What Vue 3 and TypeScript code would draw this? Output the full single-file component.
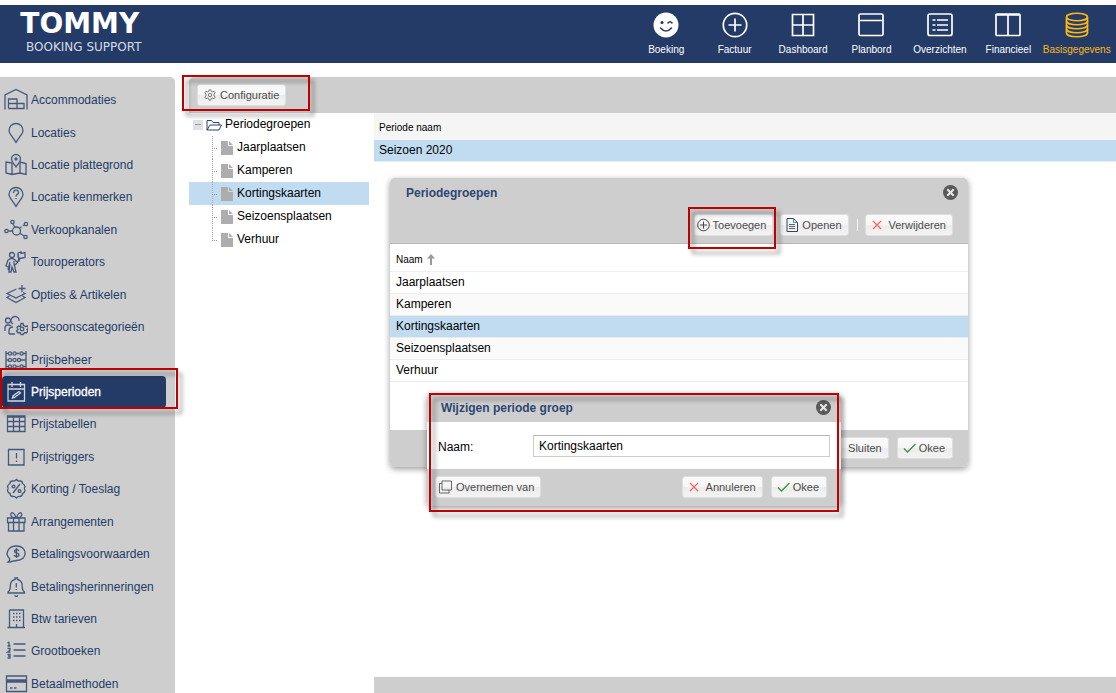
<script setup lang="ts">
import { ref } from 'vue'

interface Item {
  label: string
  icon: string[]
}

const circle = (x: number, y: number, r: number): string =>
  `M${x - r} ${y}a${r} ${r} 0 1 0 ${2 * r} 0a${r} ${r} 0 1 0 ${-2 * r} 0`

const navItems: Item[] = [
  { label: 'Boeking', icon: [] },
  { label: 'Factuur', icon: [circle(13, 13, 11.7), 'M13 6.5v13M6.5 13h13'] },
  { label: 'Dashboard', icon: ['M2.5 2.5h21v21h-21zM13 2.5v21M2.5 13h21'] },
  { label: 'Planbord', icon: ['M2.5 2h21q1.500 0 1.500 1.500v18.500q0 1.500-1.500 1.500h-21Q1 23.500 1 22V3.500Q1 2 2.500 2zM1 8.500h24'] },
  { label: 'Overzichten', icon: ['M3 2h20q2 0 2 2v17.500q0 2-2 2H3q-2 0-2-2V4q0-2 2-2z', 'M10 8h11M10 13h11M10 18h11', 'M5.500 8h3M5.500 13h3M5.500 18h3'] },
  { label: 'Financieel', icon: ['M2 2h22q1 0 1 1v19.500q0 1-1 1H2q-1 0-1-1V3q0-1 1-1zM13 2v21.500M1 3h24'] },
  {
    label: 'Basisgegevens',
    icon: [
      'M2.500 5c0-5 21-5 21 0s-21 5-21 0v16c0 5 21 5 21 0V5',
      'M2.500 9c0 5 21 5 21 0M2.500 13c0 5 21 5 21 0M2.500 17c0 5 21 5 21 0'
    ]
  }
]

const sideItems: Item[] = [
  { label: 'Accommodaties', icon: ['M1 21.500V7l11-5.500 11 5.500v14.500', 'M4.500 20.500V11h8.500v4.500M4.500 15.500H20v5H4.500M13 15.500v5'] },
  { label: 'Locaties', icon: ['M12 21.500C9 16 5 13 5 9.500a7 7 0 0 1 14 0C19 13 15 16 12 21.500z'] },
  {
    label: 'Locatie plattegrond',
    icon: ['M12 14c-2-3.500-4.500-5-4.500-8a4.500 4.500 0 0 1 9 0c0 3-2.500 4.500-4.500 8z', circle(12, 6, 1), 'M8 10l-6-1v11l6 1.500 8-1.500 6 1.500v-11l-6-1.500M8 10v11.500M16 10v10']
  },
  {
    label: 'Locatie kenmerken',
    icon: ['M12 21.500C9 16 5 13 5 9.500a7 7 0 0 1 14 0C19 13 15 16 12 21.500z', 'M9.500 8c0-4 5.500-3.500 5 0-.5 1.500-2.500 1.500-2.500 3.500M12 13v1']
  },
  {
    label: 'Verkoopkanalen',
    icon: [circle(12.5, 13, 4), circle(2.5, 13, 1.7), circle(8.500, 4, 1.700), circle(22, 6, 1.700), circle(21.500, 19, 1.700), 'M4.500 13h4M9 6l2 3.500M16 10l1.500-1.300M19 7.800l1-.7M15.800 15.300l4 2.500']
  },
  {
    label: 'Touroperators',
    icon: [circle(8, 5, 2.5), 'M14 3l3-1v1.500l4-1v5l-5 1-2-1.500zM14 3l1 9', 'M4 20l2-8M4 10q4-3 7 0l2 2 3-3M4 10l-2 6 2 1M6 14l-1 8h2l1-5 2 5h2l-2-8v-3M14 12l-3 3']
  },
  { label: 'Opties & Artikelen', icon: ['M18 2v7M14.500 5.500h7', 'M12.500 6L3 10.500l9 4.500 9-4.500-2-1M5.500 13L3 14.500l9 5 9-5-2.500-1.500'] },
  {
    label: 'Persoonscategorieën',
    icon: [circle(4, 5.500, 2.500), 'M15 6a4 4 0 1 0-6 3M1 16v-3q0-3 3-3 2 0 3 1M5 19v-3q0-4 4-4M5 19h6', circle(18, 14, 1.800), 'M17 8.500h2l.5 2 2 1 2-.5 1 2-1.500 1.500 1 1.500-1.500 2-2-.5-1.500 2h-2l-1-2-2 .5-1.500-2 1.500-1.500-1-2 1.500-1.500 2 .5z']
  },
  {
    label: 'Prijsbeheer',
    icon: ['M2 3v18.500M22 3v18.500M2 5.500h3M12 5.500h3M19 5.500h3M2 12h3M17 12h5M2 18.500h3M12 18.500h3M19 18.500h3', circle(6, 5.500, 1.600), circle(10.500, 5.500, 1.600), circle(17.500, 5.500, 1.600), circle(6, 12, 1.600), circle(10.500, 12, 1.600), circle(15, 12, 1.600), circle(6, 18.500, 1.600), circle(10.500, 18.500, 1.600), circle(17.500, 18.500, 1.600)]
  },
  { label: 'Prijsperioden', icon: ['M4 4.500h16.500V21H4zM4 9h16.500M8 2v5M16.500 2v5', 'M8.500 18l.5-2 6-4.500 1.500 1.500-6 4.500z'] },
  { label: 'Prijstabellen', icon: ['M3.500 4h17.500v15.500H3.500zM3.500 5h17.500M3.500 9.500H21M3.500 14.500H21M9.500 4v15.500M15.500 4v15.500'] },
  { label: 'Prijstriggers', icon: ['M4.500 4.500h15.500V20H4.500zM12.500 8v5.500M12.500 15.500V17'] },
  {
    label: 'Korting / Toeslag',
    icon: ['M12.500 2.500q1.500 2 3.500 1.500 2.500 0 2.500 2.500 2 1 2.500 3-1.500 2 0 4-.5 2.500-2.500 3 0 2.500-2.500 3-2-.5-3.500 1.500-2-2-4-1.500-2.500-.5-2.500-3-2-.5-2.500-3 1.500-2 0-4 .5-2 2.500-3 0-2.500 2.500-2.500 2 .5 4-1.500z', 'M9 16l7-9', circle(9.500, 9.500, 1.400), circle(15.500, 14, 1.400)]
  },
  { label: 'Arrangementen', icon: ['M3.500 8h17.500v4.500H3.500zM4.500 12.500V21H20v-8.500M9.500 8v13M15 8v13', 'M12 8C5 8 6 1.500 9 3q2 1 3 5M12.500 8c7 0 6-6.500 3-5q-2 1-3 5'] },
  { label: 'Betalingsvoorwaarden', icon: ['M4 20q2.500-1.500 1.500-3.500C.5 12 4 4 12.500 4 24 4 24 18.500 12.500 18.500 10 18.500 7 20.500 4 20z', 'M15 9c-1-2-5-1.500-4.500.5.500 2 4.500 1 4.500 3.500 0 2-4 2-5 0M12.500 6v10'] },
  { label: 'Betalingsherinneringen', icon: ['M4 17c3-2 2-5 2.500-8 .5-2.500 2-4 4.500-4.500V3h2.500v1.500c2.500.5 4 2 4.500 4.500.5 3-.5 6 2.500 8v1H4zM12.300 8v4.500M12.300 14v1M10.500 20.500q2 1.500 3.500 0'] },
  { label: 'Btw tarieven', icon: ['M5.500 3h14v17.500M5.500 3v17.500M3.500 20.500h17.500M12.500 20v-3', 'M9 6.500h1.500M12 6.500h1.500M15 6.500h1.500M9 10h1.500M12 10h1.500M15 10h1.500M9 13.500h1.500M12 13.500h1.500M15 13.500h1.500'] },
  { label: 'Grootboeken', icon: ['M9.500 5h12M9.500 11h12M9.500 17h12', 'M3.500 3.500H5V7M3.500 7h3M3.500 9.500H6v1.700L3.500 13H6.500M3.500 15.500H6V19H3.500M4 17.200h2'] },
  { label: 'Betaalmethoden', icon: ['M2.500 4h20v15.500h-20z', 'M2.500 8h20M2.500 9h20M2.500 10h20', 'M6 16h2.500M10 16h2.500'] }
]

const activeSide = ref('Prijsperioden')
const groups = ['Jaarplaatsen', 'Kamperen', 'Kortingskaarten', 'Seizoensplaatsen', 'Verhuur']
const selected = ref('Kortingskaarten')
const groupName = ref('Kortingskaarten')
</script>

<template>
  <div class="page">
    <header class="topbar">
      <a class="brand" href="#">
        <span class="brand-name">TOMMY</span>
        <span class="brand-sub">BOOKING SUPPORT</span>
      </a>
      <nav class="topnav">
        <a v-for="item in navItems" :key="item.label" href="#" :class="{ current: item.label === 'Basisgegevens' }">
          <svg v-if="item.label === 'Boeking'" viewBox="0 0 26 26">
            <circle cx="13" cy="13" r="12.5" fill="#fff" />
            <g fill="none" stroke="#243b68" stroke-width="1.600" stroke-linecap="round">
              <circle cx="9" cy="10.500" r=".8" />
              <path d="M15 11q2-2.500 4 0M7.500 16q5.500 6 11 0" />
            </g>
          </svg>
          <svg v-else viewBox="0 0 26 26">
            <path v-for="d in item.icon" :key="d" :d="d" fill="none" stroke="currentColor" stroke-width="1.700" />
          </svg>
          <span>{{ item.label }}</span>
        </a>
      </nav>
    </header>

    <div class="workspace">
      <nav class="sidebar">
        <ul>
          <li v-for="item in sideItems" :key="item.label">
            <a href="#" :class="{ active: item.label === activeSide }" @click.prevent="activeSide = item.label">
              <svg viewBox="0 0 24 24">
                <path v-for="d in item.icon" :key="d" :d="d" fill="none" stroke="currentColor" stroke-width="1.300" />
              </svg>
              <span>{{ item.label }}</span>
            </a>
            <i v-if="item.label === 'Prijsperioden'" class="mark mark-side"></i>
          </li>
        </ul>
      </nav>

      <main class="content">
        <div class="toolbar">
          <button type="button" class="btn">
            <svg class="ic12" viewBox="0 0 14 14" fill="none" stroke="#666">
              <circle cx="7" cy="7" r="2" />
              <path d="M6 1h2l.5 1.700 1.500.7 1.700-.8 1.300 1.900-1.200 1.300v2.200L13 9.500l-1.300 1.900-1.700-.8-1.500.7L8 13H6l-.5-1.700-1.500-.7-1.700.8L1 9.500l1.200-1.500V5.800L1 4.500l1.300-1.900 1.700.8 1.500-.7z" />
            </svg>
            Configuratie
          </button>
          <i class="mark mark-config"></i>
        </div>

        <div class="split">
          <div class="tree">
            <div class="tree-row root">
              <span class="toggle"></span>
              <svg class="folder" viewBox="0 0 16 12" fill="none" stroke="#2d4370">
                <path d="M1 11V1.500h4.500L7 3.500h6V6M1 11l3-5h11.500L13 11z" />
              </svg>
              <span>Periodegroepen</span>
            </div>
            <ul>
              <li v-for="g in groups" :key="g" class="tree-row" :class="{ selected: g === selected }">
                <svg class="leaf" viewBox="0 0 12 14"><path d="M0 0h7v5h5v9H0z" fill="#adadad" /><path d="M8 0l4 4H8z" fill="#adadad" /></svg>
                <span>{{ g }}</span>
              </li>
            </ul>
          </div>

          <section class="periods">
            <table>
              <thead><tr><th>Periode naam</th></tr></thead>
              <tbody><tr><td>Seizoen 2020</td></tr></tbody>
            </table>
            <div class="bottombar"></div>
          </section>
        </div>
      </main>
    </div>

    <section class="window groups-window" aria-label="Periodegroepen">
      <div class="win-head">
        <h2>Periodegroepen</h2>
        <button type="button" class="close" aria-label="Sluiten">
          <svg viewBox="0 0 14 14"><circle cx="7" cy="7" r="7" fill="#595959" /><path d="M4 4l6 6M10 4l-6 6" stroke="#e4e4e4" stroke-width="2" /></svg>
        </button>
      </div>
      <div class="win-tools">
        <div class="marked">
          <button type="button" class="btn tight">
            <svg class="ic13" viewBox="0 0 13 13" fill="none" stroke="#444"><circle cx="6.500" cy="6.500" r="5.800" /><path d="M6.500 3v7M3 6.500h7" /></svg>
            Toevoegen
          </button>
          <i class="mark mark-add"></i>
        </div>
        <button type="button" class="btn open">
          <svg class="ic13" viewBox="0 0 13 14" fill="none"><path d="M1 .5h6.500L11.500 4.500v9H1z" stroke="#2d4370" /><path d="M7.500.5v4h4" stroke="#4a87b5" /><path d="M3 6.500h6M3 8.500h6M3 10.500h6" stroke="#666" /></svg>
          Openen
        </button>
        <span class="sep"></span>
        <button type="button" class="btn">
          <svg class="ic10" viewBox="0 0 10 10"><path d="M1 1l8 8M9 1l-8 8" stroke="#f8665c" stroke-width="1.300" /></svg>
          Verwijderen
        </button>
      </div>
      <table class="groups-table">
        <thead>
          <tr>
            <th>Naam
              <svg class="sort" viewBox="0 0 8 11"><path d="M4 0l4 4.500H5V11H3V4.500H0z" fill="#999" /></svg>
            </th>
          </tr>
        </thead>
        <tbody>
          <tr v-for="g in groups" :key="g" :class="{ selected: g === selected }" @click="selected = g"><td>{{ g }}</td></tr>
        </tbody>
      </table>
      <div class="win-foot">
        <button type="button" class="btn">
          <svg class="ic10" viewBox="0 0 10 10"><path d="M1 1l8 8M9 1l-8 8" stroke="#f8665c" stroke-width="1.300" /></svg>
          Sluiten
        </button>
        <button type="button" class="btn ok">
          <svg class="ic13" viewBox="0 0 13 10"><path d="M1 5.500L4.500 9 12.500 1" fill="none" stroke="#3a8f45" stroke-width="1.300" /></svg>
          Okee
        </button>
      </div>
    </section>

    <form class="window edit-window" @submit.prevent>
      <div class="win-head">
        <h2>Wijzigen periode groep</h2>
        <button type="button" class="close" aria-label="Sluiten">
          <svg viewBox="0 0 14 14"><circle cx="7" cy="7" r="7" fill="#595959" /><path d="M4 4l6 6M10 4l-6 6" stroke="#e4e4e4" stroke-width="2" /></svg>
        </button>
      </div>
      <div class="field">
        <label for="group-name">Naam:</label>
        <input id="group-name" v-model="groupName" type="text" />
      </div>
      <div class="win-foot">
        <button type="button" class="btn copy">
          <svg class="ic13" viewBox="0 0 13 13" fill="none" stroke="#666"><path d="M3 .5h9.500v9H3zM3 3H.5v9.500H10v-3" /></svg>
          Overnemen van
        </button>
        <button type="button" class="btn">
          <svg class="ic10" viewBox="0 0 10 10"><path d="M1 1l8 8M9 1l-8 8" stroke="#f8665c" stroke-width="1.300" /></svg>
          Annuleren
        </button>
        <button type="submit" class="btn ok">
          <svg class="ic13" viewBox="0 0 13 10"><path d="M1 5.500L4.500 9 12.500 1" fill="none" stroke="#3a8f45" stroke-width="1.300" /></svg>
          Okee
        </button>
      </div>
      <i class="mark mark-edit"></i>
    </form>
  </div>
</template>

<style>
body {
  margin: 0;
  background: #fff;
}
</style>

<style scoped>
* {
  box-sizing: border-box;
}
.page {
  position: relative;
  display: flex;
  flex-direction: column;
  height: 100vh;
  padding-top: 5px;
  overflow: hidden;
  font: 12px/16px "Liberation Sans", Arial, sans-serif;
  color: #000;
}
ul {
  list-style: none;
  margin: 0;
  padding: 0;
}
a {
  text-decoration: none;
}
table {
  width: 100%;
  border-collapse: collapse;
}
th {
  font-weight: 400;
  font-size: 10px;
  text-align: left;
}
.topbar {
  display: flex;
  justify-content: space-between;
  height: 58px;
  flex: none;
  background: #243b68;
}
.brand {
  display: flex;
  flex-direction: column;
  align-items: center;
  padding: 3px 0 0 18px;
  color: #fff;
}
.brand-name {
  font: bold 28px/32px "DejaVu Sans", sans-serif;
}
.brand-sub {
  padding-left: 8px;
  font: 12px/14px "DejaVu Sans", sans-serif;
  color: #d5dbe6;
}
.topnav {
  display: grid;
  grid-template-columns: repeat(7, 1fr);
  width: 479px;
  margin-right: 5px;
}
.topnav a {
  display: flex;
  flex-direction: column;
  align-items: center;
  padding-top: 7px;
  font-size: 10px;
  line-height: 12px;
  color: #fff;
  white-space: nowrap;
}
.topnav a.current {
  color: #fdb913;
}
.topnav svg {
  width: 26px;
  height: 26px;
  margin-bottom: 6px;
}
.workspace {
  display: flex;
  flex: 1;
  min-height: 0;
  gap: 14px;
  padding-top: 14px;
}
.sidebar {
  width: 175px;
  flex: none;
  padding-top: 7px;
  background: #cecece;
  border-radius: 0 5px 0 0;
}
.sidebar ul {
  display: grid;
  grid-auto-rows: 1fr;
  height: calc(100% + 7px);
}
.sidebar li {
  position: relative;
  padding: 0 9px 0 2px;
}
.sidebar a {
  display: flex;
  align-items: center;
  gap: 3px;
  height: 100%;
  padding-left: 2px;
  border-radius: 4px;
  color: #243b68;
}
.sidebar a.active {
  color: #fff;
  background: #243b68;
  -webkit-text-stroke: 0.3px #fff;
}
.sidebar svg {
  width: 24px;
  height: 24px;
  opacity: 0.8;
}
.content {
  display: flex;
  flex-direction: column;
  flex: 1;
  min-width: 0;
}
.toolbar {
  position: relative;
  height: 36px;
  flex: none;
  padding: 7px 8px;
  background: #cecece;
  border-radius: 5px 0 0 0;
}
.btn {
  display: inline-flex;
  align-items: center;
  gap: 7px;
  height: 22px;
  padding: 0 6px;
  border: 1px solid #dedede;
  border-radius: 3px;
  background: linear-gradient(#fafafa 0, #f6f6f6 50%, #ececec 50%, #f3f3f3 100%);
  font: 11px/16px "Liberation Sans", Arial, sans-serif;
  color: #4c4c4c;
  white-space: nowrap;
}
.toolbar .btn {
  gap: 4px;
}
.ic10 {
  width: 10px;
  height: 10px;
}
.ic12 {
  width: 12px;
  height: 12px;
}
.ic13 {
  width: 13px;
  height: 14px;
}
.split {
  display: flex;
  flex: 1;
  gap: 5px;
}
.tree {
  width: 180px;
  flex: none;
}
.tree-row {
  display: flex;
  align-items: center;
  height: 23px;
}
.tree-row > span {
  padding-bottom: 2px;
}
.tree-row.root {
  gap: 3px;
  padding-left: 4px;
}
.tree-row > .toggle {
  width: 10px;
  height: 10px;
  padding: 0;
  background: linear-gradient(#999, #999) center / 6px 1px no-repeat #e0e2e8;
}
.folder {
  width: 16px;
  height: 12px;
}
.tree ul .tree-row {
  gap: 4px;
  padding-left: 23px;
  background: repeating-linear-gradient(#aaa 0 1px, transparent 1px 2px) 23px 0 / 1px 100% no-repeat;
}
.tree ul .tree-row::before {
  content: "";
  align-self: flex-start;
  width: 5px;
  height: 12px;
  border-bottom: 1px dotted #999;
}
.tree ul .tree-row:last-child {
  background-size: 1px 12px;
}
.tree ul .tree-row.selected {
  background-color: #c1dcf0;
}
.leaf {
  width: 12px;
  height: 14px;
}
.periods {
  display: flex;
  flex-direction: column;
  flex: 1;
  justify-content: space-between;
}
.periods th {
  height: 27px;
  padding: 2px 5px 0;
  background: #f5f5f5;
}
.periods td {
  height: 21px;
  padding: 0 5px;
  background: #c1dcf0;
  border-bottom: 1px solid #e2edf5;
}
.bottombar {
  height: 16px;
  background: #cecece;
}
.window {
  position: absolute;
  background: #fff;
  border-radius: 5px;
  box-shadow: 0 2px 6px rgba(0, 0, 0, 0.4);
}
.groups-window {
  display: flex;
  flex-direction: column;
  left: 390px;
  top: 178px;
  width: 578px;
  min-height: 289px;
}
.win-head {
  display: flex;
  align-items: center;
  justify-content: space-between;
  height: 29px;
  padding: 0 10px 0 16px;
  background: #cecece;
  border-radius: 5px 5px 0 0;
}
h2 {
  margin: 0;
  font-size: 12px;
  line-height: 16px;
  font-weight: 700;
  color: #2f4672;
}
.close {
  display: flex;
  padding: 0;
  border: 0;
  background: none;
}
.close svg {
  width: 15px;
  height: 15px;
}
.win-tools {
  display: flex;
  justify-content: flex-end;
  height: 37px;
  padding: 7px 15px 0 0;
  background: #cecece;
  border-bottom: 1px solid #b8b8b8;
}
.marked {
  position: relative;
  margin-right: 7px;
}
.btn.tight {
  gap: 3px;
  padding: 0 6px 0 2px;
}
.btn.open {
  gap: 3px;
  padding: 0 6px 0 5px;
}
.sep {
  width: 1px;
  height: 12px;
  margin: 5px 7px 0 8px;
  background: #f5f5f5;
}
.groups-table th {
  height: 27px;
  padding: 5px 6px 0;
  border-bottom: 1px solid #f0f0f0;
}
.sort {
  width: 8px;
  height: 11px;
  margin-left: 2px;
  vertical-align: -2px;
}
.groups-table td {
  height: 22px;
  padding: 0 6px;
  border-bottom: 1px solid #ececec;
}
.groups-table tbody tr:nth-child(even) {
  background: #fafafa;
}
.groups-table tbody tr.selected {
  background: #c1dcf0;
}
.win-foot {
  display: flex;
  justify-content: flex-end;
  gap: 8px;
  height: 37px;
  margin-top: auto;
  padding: 7px 15px 0 8px;
  background: #cecece;
  border-radius: 0 0 5px 5px;
}
.btn.ok {
  gap: 3px;
  padding: 0 7px 0 5px;
}
.edit-window {
  left: 427px;
  top: 393px;
  width: 414px;
}
.edit-window .win-head {
  padding-left: 14px;
}
.field {
  display: flex;
  align-items: center;
  height: 47px;
  padding: 0 11px;
}
.field label {
  width: 95px;
  padding-top: 2px;
}
.field input {
  flex: 1;
  min-width: 0;
  height: 22px;
  padding: 0 5px;
  border: 1px solid #ccc;
  border-top-color: #b5b5b5;
  border-radius: 0;
  font: 12px/16px "Liberation Sans", Arial, sans-serif;
  color: #000;
}
.edit-window .win-foot {
  padding-right: 14px;
}
.btn.copy {
  gap: 4px;
  margin-right: auto;
  padding: 0 6px 0 3px;
}
.mark {
  position: absolute;
  border: 2px solid #c00000;
  filter: drop-shadow(4px 5px 2px rgba(0, 0, 0, 0.4));
  pointer-events: none;
}
.mark-side {
  inset: -8px -3px -1px 0;
}
.mark-config {
  left: -7px;
  top: -2px;
  width: 128px;
  height: 36px;
}
.mark-add {
  inset: -7px -3px -6px -6px;
}
.mark-edit {
  inset: 0 2px -6px 2px;
}
</style>
